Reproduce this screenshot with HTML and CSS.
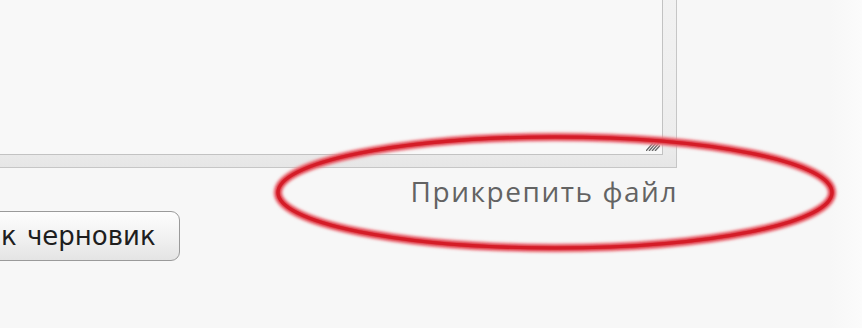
FILE: index.html
```html
<!DOCTYPE html>
<html lang="ru">
<head>
<meta charset="utf-8">
<title>Прикрепить файл</title>
<link rel="stylesheet" href="styles.css">
</head>
<body>
<div class="page">
  <div class="frame">
    <div class="textarea">
      <svg class="grip" width="14" height="10" viewBox="0 0 14 10">
        <path d="M3 10 L10 2 M6 10 L13 2 M9 10 L14 4.5 M0 10 L7 2" stroke="#666" stroke-width="1.3" fill="none"/>
      </svg>
    </div>
  </div>
  <div class="attach-row">
    <span class="attach">Прикрепить файл</span>
  </div>
  <div class="button-row">
    <button class="btn">к черновик</button>
  </div>
  <svg class="circle" width="590" height="140" viewBox="0 0 590 140">
    <defs>
      <filter id="glow" x="-5%" y="-20%" width="110%" height="140%">
        <feGaussianBlur stdDeviation="1.8"/>
      </filter>
    </defs>
    <ellipse cx="285" cy="64.5" rx="277" ry="55.5" fill="none" stroke="#f0959b" stroke-width="9" filter="url(#glow)"/>
    <ellipse cx="285" cy="64.5" rx="277" ry="55.5" fill="none" stroke="#d81e29" stroke-width="5" filter="url(#glow)"/>
    <ellipse cx="285" cy="64.5" rx="277" ry="55.5" fill="none" stroke="#d41c27" stroke-width="3.2"/>
  </svg>
</div>
</body>
</html>
```
FILE: styles.css
```css
html, body {
  margin: 0;
  padding: 0;
  background: #f7f7f7;
  overflow: hidden;
}
.page {
  position: relative;
  width: 862px;
  height: 328px;
  overflow: hidden;
  background: linear-gradient(to right, #f7f7f7 0, #f7f7f7 830px, #fbfbfb 862px);
}
.frame {
  margin-top: -20px;
  margin-left: -20px;
  width: 683px;
  padding: 0 13px 12px 0;
  border-right: 1px solid #c6c6c6;
  border-bottom: 1px solid #c6c6c6;
  background: linear-gradient(to bottom, #f2f2f2 0, #ededed 160px, #e6e6e6 188px);
}
.textarea {
  position: relative;
  height: 173px;
  border: 1px solid #c2c2c2;
  background: #f8f8f8;
}
.grip {
  position: absolute;
  right: 2px;
  bottom: 3px;
}
.attach-row {
  display: flex;
  justify-content: flex-end;
  width: 677px;
  margin-top: 4px;
}
.attach {
  font-family: "Open Sans", "DejaVu Sans", sans-serif;
  font-size: 28px;
  line-height: 38px;
  color: #636363;
  letter-spacing: 1.55px;
  margin-right: -1px;
}
.button-row {
  margin-top: 1px;
  margin-left: -20px;
}
.btn {
  box-sizing: border-box;
  width: 200px;
  height: 50px;
  padding: 0 0 1px 20px;
  text-align: left;
  border: 1px solid #9a9a9a;
  border-radius: 9px;
  background: linear-gradient(to bottom, #fdfdfd 0, #f2f2f2 50%, #e4e4e4 100%);
  font-family: "DejaVu Sans", Verdana, sans-serif;
  font-size: 26px;
  word-spacing: 2px;
  color: #1e1e1e;
}
.circle {
  position: absolute;
  left: 270px;
  top: 128px;
}
```
